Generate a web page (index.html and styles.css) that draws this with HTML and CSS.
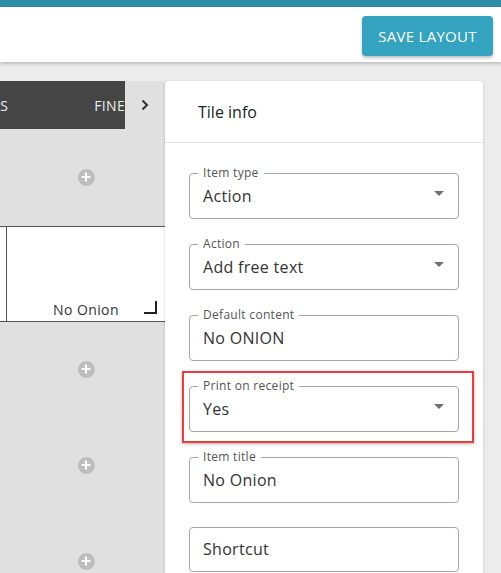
FILE: index.html
```html
<!DOCTYPE html>
<html lang="en">

<head>
    <meta charset="UTF-8">
    <meta name="viewport" content="width=device-width, initial-scale=1.0">
    <title>Layout editor</title>
    <link rel="stylesheet" href="styles.css">
</head>

<body>
    <div class="topbar"></div>
    <header class="header">
        <button class="save-btn">Save layout</button>
    </header>

    <main class="main">
        <!-- tile grid -->
        <section class="canvas">
            <div class="tabs">
                <div class="tabs-scroll">
                    <div class="tabs-track">
                        <span class="tab">Drinks</span>
                        <span class="tab">Fine dining</span>
                    </div>
                </div>
                <div class="tabs-next">
                    <svg width="10" height="12" viewBox="0 0 10 12">
                        <path d="M2.5 1.5 L7 6 L2.5 10.5" fill="none" stroke="#333" stroke-width="2" />
                    </svg>
                </div>
            </div>

            <div class="grid-row">
                <div class="slot"><span class="add-btn"></span></div>
            </div>
            <div class="grid-row">
                <div class="tile tile-prev"></div>
                <div class="tile">
                    <span class="tile-label">No Onion</span>
                    <span class="resize-handle"></span>
                </div>
            </div>
            <div class="grid-row">
                <div class="slot"><span class="add-btn"></span></div>
            </div>
            <div class="grid-row">
                <div class="slot"><span class="add-btn"></span></div>
            </div>
            <div class="grid-row">
                <div class="slot"><span class="add-btn"></span></div>
            </div>
        </section>

        <!-- tile properties -->
        <aside class="panel">
            <div class="panel-head">Tile info</div>
            <div class="panel-body">
                <fieldset class="field">
                    <legend>Item type</legend>
                    <div class="field-row">
                        <span class="field-value">Action</span>
                        <span class="caret"></span>
                    </div>
                </fieldset>
                <fieldset class="field">
                    <legend>Action</legend>
                    <div class="field-row">
                        <span class="field-value">Add free text</span>
                        <span class="caret"></span>
                    </div>
                </fieldset>
                <fieldset class="field">
                    <legend>Default content</legend>
                    <div class="field-row">
                        <span class="field-value">No ONION</span>
                    </div>
                </fieldset>
                <div class="highlight">
                    <fieldset class="field">
                        <legend>Print on receipt</legend>
                        <div class="field-row">
                            <span class="field-value">Yes</span>
                            <span class="caret"></span>
                        </div>
                    </fieldset>
                </div>
                <fieldset class="field">
                    <legend>Item title</legend>
                    <div class="field-row">
                        <span class="field-value">No Onion</span>
                    </div>
                </fieldset>
                <fieldset class="field field-plain">
                    <div class="field-row">
                        <span class="field-value">Shortcut</span>
                    </div>
                </fieldset>
            </div>
        </aside>
    </main>
</body>

</html>
```

FILE: styles.css
```css
* {
    padding: 0;
    margin: 0;
    box-sizing: border-box;
}

html,
body {
    height: 100%;
    overflow: hidden;
}

body {
    background-color: #ececec;
    font-family: "Open Sans", "Liberation Sans", sans-serif;
    color: #333;
}

.topbar {
    height: 7px;
    background-color: #2a8ca5;
}

.header {
    height: 55px;
    background-color: #fff;
    display: flex;
    justify-content: flex-end;
    align-items: center;
    padding-right: 8px;
    box-shadow: 0 2px 3px rgba(0, 0, 0, 0.2);
    position: relative;
}

.save-btn {
    width: 131px;
    height: 40px;
    border: 0;
    border-radius: 4px;
    background-color: #33a3bf;
    color: #fff;
    font: 15px "Open Sans", sans-serif;
    text-transform: uppercase;
    letter-spacing: 0.3px;
    box-shadow: 0 2px 3px rgba(0, 0, 0, 0.25);
    margin-top: 2px;
}

.main {
    display: flex;
    align-items: flex-start;
    padding-top: 19px;
    height: 100%;
}

/* grid side */
.canvas {
    width: 166px;
    flex: none;
    height: 100%;
    background-color: #e0e0e0;
    overflow: hidden;
}

.tabs {
    display: flex;
    height: 48px;
}

.tabs-scroll {
    width: 125px;
    background-color: #454545;
    overflow: hidden;
}

.tabs-track {
    display: flex;
    height: 100%;
    margin-left: -86px;
}

.tab {
    flex: none;
    display: flex;
    align-items: center;
    padding: 0 43px;
    color: #eee;
    font-size: 14px;
    text-transform: uppercase;
    letter-spacing: 0.3px;
}

.tabs-next {
    width: 40px;
    display: flex;
    align-items: center;
    justify-content: center;
}

.grid-row {
    height: 96px;
    display: flex;
    padding-left: 6px;
}

.slot {
    width: 160px;
    flex: none;
    display: flex;
    align-items: center;
    justify-content: center;
}

.add-btn {
    width: 17px;
    height: 17px;
    border-radius: 50%;
    background-color: #bdbdbd;
    position: relative;
}

.add-btn::before,
.add-btn::after {
    content: "";
    position: absolute;
    background-color: #fff;
    left: 50%;
    top: 50%;
    transform: translate(-50%, -50%);
}

.add-btn::before {
    width: 9px;
    height: 2px;
}

.add-btn::after {
    width: 2px;
    height: 9px;
}

.tile {
    width: 160px;
    flex: none;
    height: 96px;
    margin-top: 1px;
    background-color: #fff;
    border: 1px solid #555;
    position: relative;
    display: flex;
    align-items: flex-end;
    justify-content: center;
    padding-bottom: 2px;
}

.tile-prev {
    margin-left: -160px;
    border-right: 0;
}

.tile-label {
    font-size: 14px;
    line-height: 18px;
    letter-spacing: 0.4px;
    color: #333;
}

.resize-handle {
    position: absolute;
    right: 8px;
    bottom: 7px;
    width: 13px;
    height: 13px;
    border-right: 2px solid #222;
    border-bottom: 2px solid #222;
}

/* properties panel */
.panel {
    width: 318px;
    flex: none;
    height: 100%;
    margin-left: -1px;
    position: relative;
    background-color: #fff;
    border-radius: 4px 4px 0 0;
    box-shadow: 0 1px 3px rgba(0, 0, 0, 0.2);
}

.panel-head {
    height: 62px;
    display: flex;
    align-items: center;
    padding-left: 33px;
    font-size: 16px;
    font-weight: 500;
    color: #222;
    border-bottom: 1px solid #e3e3e3;
}

.panel-body {
    padding: 23px 24px 0 24px;
}

.field {
    border: 1px solid #a6a6a6;
    border-radius: 4px;
    padding: 0 13px;
    margin-bottom: 18px;
    min-width: 0;
}

.field legend {
    font-size: 12px;
    line-height: 14px;
    padding: 0 5px;
    margin-left: -5px;
    color: #555;
    letter-spacing: 0.3px;
}

.field-row {
    display: flex;
    align-items: center;
    padding: 6px 0 12px;
}

.field-value {
    flex: 1;
    font-size: 16px;
    line-height: 20px;
    color: #333;
    letter-spacing: 0.3px;
}

.caret {
    width: 0;
    height: 0;
    border-left: 5px solid transparent;
    border-right: 5px solid transparent;
    border-top: 5px solid #707070;
    margin: -6px 1px 0 0;
}

.field-plain {
    margin-top: 24px;
}

.field-plain .field-row {
    padding-top: 11px;
}

.highlight {
    position: relative;
}

.highlight::after {
    content: "";
    position: absolute;
    left: -7px;
    right: -15px;
    top: -8px;
    bottom: -11px;
    border: 2px solid #ee3a3d;
    box-shadow: 0 1px 3px rgba(0, 0, 0, 0.3);
    pointer-events: none;
}
```
